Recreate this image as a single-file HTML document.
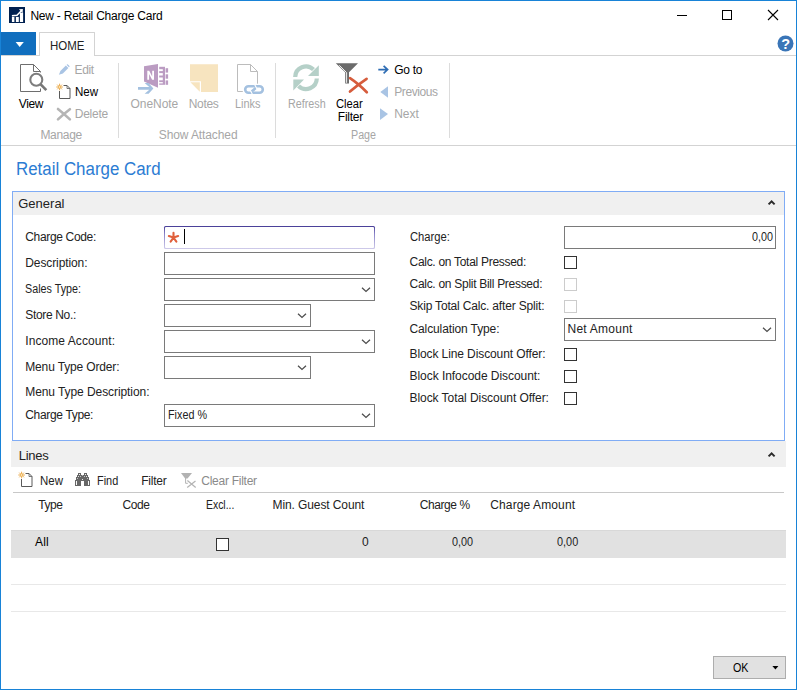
<!DOCTYPE html>
<html><head><meta charset="utf-8"><title>New - Retail Charge Card</title>
<style>
html,body{margin:0;padding:0;background:#fff;}
body{width:799px;height:693px;position:relative;overflow:hidden;font-family:"Liberation Sans",sans-serif;}
.t{position:absolute;transform-origin:0 0;white-space:pre;line-height:20px;height:20px;font-family:"Liberation Sans",sans-serif;}
.r{position:absolute;box-sizing:border-box;}
svg{position:absolute;overflow:visible;}
</style></head><body>
<div class="r" style="left:0px;top:0px;width:797px;height:690px;border:1px solid #1883d7;"></div>
<svg style="left:9px;top:7px" width="16" height="16" viewBox="0 0 16 16"><rect width="16" height="16" fill="#002050"/>
<rect x="2.9" y="9.9" width="2.5" height="5.1" fill="#fff"/><rect x="6.9" y="9.9" width="2.9" height="5.1" fill="#fff"/><rect x="10.9" y="5.6" width="3.2" height="9.4" fill="#fff"/>
<path d="M2.9 8.7 L8 8.3 L12.6 3.4" stroke="#fff" stroke-width="1.5" fill="none"/><path d="M9.9 2.3 L13.9 2 L13.6 6 Z" fill="#fff"/></svg>
<span class="t" style="left:30.40px;top:6px;font-size:12px;letter-spacing:-0.225px;color:#000;">New - Retail Charge Card</span>
<svg style="left:677px;top:9px" width="110" height="14" viewBox="0 0 110 14"><path d="M0 6.5 H10" stroke="#000" stroke-width="1"/><rect x="45.5" y="1.5" width="9" height="9" fill="none" stroke="#000" stroke-width="1"/><path d="M91 1 L101 11 M101 1 L91 11" stroke="#000" stroke-width="1.1"/></svg>
<div class="r" style="left:1px;top:32px;width:35px;height:23px;background:#106ebe;"></div>
<svg style="left:15px;top:42px" width="10" height="6" viewBox="0 0 10 6"><path d="M0.6 0 H8.8 L4.7 5 Z" fill="#fff"/></svg>
<div class="r" style="left:1px;top:55px;width:795px;height:1px;background:#d3d3d3;"></div>
<div class="r" style="left:39px;top:32px;width:56px;height:24px;background:#fff;border:1px solid #d3d3d3;border-bottom:none;border-radius:1px 1px 0 0;"></div>
<span class="t" style="left:50.00px;top:36px;font-size:12px;transform:scaleX(0.9583);color:#222;">HOME</span>
<svg style="left:776.5px;top:35.3px" width="17" height="17" viewBox="0 0 17 17"><circle cx="8.5" cy="8.5" r="8" fill="#3a75b7"/><text x="8.6" y="13.6" text-anchor="middle" font-family="Liberation Sans" font-weight="bold" font-size="14.5" fill="#fff">?</text></svg>
<div class="r" style="left:1px;top:145px;width:795px;height:1px;background:#d3d3d3;"></div>
<div class="r" style="left:118px;top:63px;width:1px;height:75px;background:#dcdcdc;"></div>
<div class="r" style="left:275px;top:63px;width:1px;height:75px;background:#dcdcdc;"></div>
<div class="r" style="left:449px;top:63px;width:1px;height:75px;background:#dcdcdc;"></div>
<span class="t" style="left:18.70px;top:94px;font-size:12px;letter-spacing:-0.325px;color:#000;">View</span>
<span class="t" style="left:74.50px;top:60px;font-size:12px;letter-spacing:-0.375px;color:#a6a6a6;">Edit</span>
<span class="t" style="left:74.80px;top:82px;font-size:12px;transform:scaleX(0.9617);color:#000;">New</span>
<span class="t" style="left:74.80px;top:104px;font-size:12px;letter-spacing:-0.270px;color:#a6a6a6;">Delete</span>
<span class="t" style="left:40.40px;top:125px;font-size:12px;letter-spacing:-0.315px;color:#a6a6a6;">Manage</span>
<span class="t" style="left:130.50px;top:94px;font-size:12px;letter-spacing:-0.042px;color:#a6a6a6;">OneNote</span>
<span class="t" style="left:188.75px;top:94px;font-size:12px;letter-spacing:-0.344px;color:#a6a6a6;">Notes</span>
<span class="t" style="left:235.00px;top:94px;font-size:12px;transform:scaleX(0.9107);color:#a6a6a6;">Links</span>
<span class="t" style="left:158.75px;top:125px;font-size:12px;letter-spacing:-0.104px;color:#a6a6a6;">Show Attached</span>
<span class="t" style="left:287.50px;top:94px;font-size:12px;transform:scaleX(0.8976);color:#a6a6a6;">Refresh</span>
<span class="t" style="left:336.00px;top:94px;font-size:12px;transform:scaleX(0.9328);color:#000;">Clear</span>
<span class="t" style="left:337.80px;top:107px;font-size:12px;letter-spacing:-0.245px;color:#000;">Filter</span>
<span class="t" style="left:394.25px;top:60px;font-size:12px;letter-spacing:-0.281px;color:#000;">Go to</span>
<span class="t" style="left:394.25px;top:82px;font-size:12px;letter-spacing:-0.429px;color:#a6a6a6;">Previous</span>
<span class="t" style="left:394.25px;top:104px;font-size:12px;letter-spacing:-0.042px;color:#a6a6a6;">Next</span>
<span class="t" style="left:351.25px;top:125px;font-size:12px;transform:scaleX(0.8929);color:#a6a6a6;">Page</span>
<svg style="left:0;top:0" width="799" height="693" viewBox="0 0 799 693">
<path d="M40.5 72.5 V71.5 L33.5 64.5 H20.5 V91.5 H40.5 V88.5" fill="none" stroke="#6e6e6e" stroke-width="1"/>
<path d="M33.5 64.5 V71.5 H40.5" fill="none" stroke="#6e6e6e" stroke-width="1"/>
<circle cx="36.3" cy="79.8" r="6.0" fill="#fff" stroke="#7d7d7d" stroke-width="2.1"/>
<path d="M40.7 84.4 L46.3 90.1" stroke="#777" stroke-width="2.7" stroke-linecap="butt"/>
<path d="M58.9 74.8 L60.4 70.9 L65.9 65.4 L68.4 67.9 L62.9 73.4 Z" fill="#a9c4e4"/>
<path d="M66.6 64.8 L67.6 64.2 L69.6 66.2 L69 67.3 Z" fill="#9dbbe0"/>
<g fill="none" stroke="#5a5a5a" stroke-width="1"><path d="M63.5 85.5 H67 L70 88.5 V98.5 H59.5 V91"/><path d="M67 85.5 V88.5 H70" stroke-width="0.8"/></g><g stroke="#e8a33d" stroke-width="0.9"><path d="M56.30 87.00 L62.90 87.00"/><path d="M57.27 84.67 L61.93 89.33"/><path d="M59.60 83.70 L59.60 90.30"/><path d="M61.93 84.67 L57.27 89.33"/></g><circle cx="59.6" cy="87" r="1.2" fill="#fff3d0" stroke="#e8a33d" stroke-width="0.7"/>
<path d="M58 109 Q63.5 113.4 69.9 119.4 M69.9 109.2 Q63.5 114 58 119.4" stroke="#b5b5b5" stroke-width="2.6" fill="none" stroke-linecap="round"/>
<path d="M144 66.2 L158 64 V87.8 L144 81.5 Z" fill="#bb9cc2"/>
<path d="M147.3 79.8 V70.8 H149.2 L152.2 76.6 V70.8 H154 V79.8 H152.1 L149.1 74 V79.8 Z" fill="#fff"/>
<rect x="159.2" y="66.8" width="5.8" height="18" fill="#bb9cc2"/>
<rect x="158.6" y="69.2" width="4.2" height="1.9" fill="#fff"/>
<rect x="158.6" y="73.1" width="4.2" height="2.4" fill="#fff"/>
<rect x="158.6" y="77.5" width="4.2" height="2.8" fill="#fff"/>
<rect x="158.6" y="82.1" width="4.2" height="1.3" fill="#fff"/>
<rect x="165.6" y="68.2" width="2.5" height="4.4" fill="#bb9cc2"/>
<rect x="165.6" y="74.3" width="2.5" height="4.4" fill="#bb9cc2"/>
<rect x="165.6" y="80.4" width="2.5" height="4.4" fill="#bb9cc2"/>
<path d="M138 87 H149.3 L144.6 83 H148.6 L153.4 88.4 L148.6 93.8 H144.6 L149.3 89.8 H138 Z" fill="#a4c1e0"/>
<path d="M190 64.2 H218 V92 H201 V81.2 H190 Z" fill="#f7e4bf"/>
<path d="M190.4 82.3 H199.8 V91.8 Z" fill="#f7e4bf"/>
<path d="M257.5 83.7 V71.5 L250.5 64.5 H237.5 V91.5 H242.8" fill="none" stroke="#bcbcbc" stroke-width="1"/>
<path d="M250.5 64.5 V71.5 H257.5" fill="none" stroke="#bcbcbc" stroke-width="1"/>
<rect x="245.2" y="86.2" width="17.6" height="6.5" rx="3.25" fill="none" stroke="#a4c1e0" stroke-width="2.6"/>
<path d="M251.6 91.6 L256.4 87.6" stroke="#a4c1e0" stroke-width="2.6"/>
<path d="M254.5 84.3 L257.1 89.2 M250.2 90.2 L252.8 95" stroke="#fff" stroke-width="1.1"/>
<path d="M295.2 77 A10.8 10.8 0 0 1 313.5 69.5" fill="none" stroke="#b5d0c8" stroke-width="4.2"/>
<path d="M318.8 65.2 V76 H308 Z" fill="#b5d0c8"/>
<path d="M316.8 78.5 A10.8 10.8 0 0 1 298.5 86" fill="none" stroke="#b5d0c8" stroke-width="4.2"/>
<path d="M293.3 90.4 V79.5 H304 Z" fill="#b5d0c8"/>
<path d="M335.8 63.2 H358 L349 72.2 V83.6 H345.2 V72.2 Z" fill="#6b6b6b"/>
<path d="M339.3 65.3 L346.6 72.6 V82.8" fill="none" stroke="#fff" stroke-width="0.9"/>
<path d="M350 78.2 Q358 83.5 366.8 92.2 M366.6 78.8 Q358 84.5 350 91.6" stroke="#d65c3c" stroke-width="2.7" fill="none" stroke-linecap="round"/>
<path d="M378.3 69.6 H387 M383.6 65.8 L387.6 69.6 L383.6 73.4" stroke="#2e6db4" stroke-width="1.7" fill="none"/>
<path d="M388 86.2 V97.8 L380.3 92 Z" fill="#a9c4e4"/>
<path d="M380 108.2 V120 L388 114.1 Z" fill="#a9c4e4"/>
<g fill="none" stroke="#5a5a5a" stroke-width="1"><path d="M25.5 473.5 H29 L32 476.5 V486.5 H21.5 V479"/><path d="M29 473.5 V476.5 H32" stroke-width="0.8"/></g><g stroke="#e8a33d" stroke-width="0.9"><path d="M18.30 475.00 L24.90 475.00"/><path d="M19.27 472.67 L23.93 477.33"/><path d="M21.60 471.70 L21.60 478.30"/><path d="M23.93 472.67 L19.27 477.33"/></g><circle cx="21.6" cy="475" r="1.2" fill="#fff3d0" stroke="#e8a33d" stroke-width="0.7"/>
<g shape-rendering="crispEdges" fill="#666"><rect x="78" y="473" width="3" height="1"/><rect x="84" y="473" width="3" height="1"/><rect x="78" y="474" width="3" height="1"/><rect x="84" y="474" width="3" height="1"/><rect x="77" y="475" width="11" height="1"/><rect x="77" y="476" width="11" height="1"/><rect x="76" y="477" width="13" height="1"/><rect x="76" y="478" width="13" height="1"/><rect x="76" y="479" width="13" height="1"/><rect x="75" y="480" width="15" height="1"/><rect x="75" y="481" width="6" height="1"/><rect x="84" y="481" width="6" height="1"/><rect x="75" y="482" width="6" height="1"/><rect x="84" y="482" width="6" height="1"/><rect x="75" y="483" width="6" height="1"/><rect x="84" y="483" width="6" height="1"/><rect x="75" y="484" width="6" height="1"/><rect x="84" y="484" width="6" height="1"/><rect x="75" y="485" width="6" height="1"/><rect x="84" y="485" width="6" height="1"/></g><g shape-rendering="crispEdges" fill="#fff"><rect x="79" y="474" width="1" height="1" opacity="0.9"/><rect x="85" y="474" width="1" height="1" opacity="0.9"/><rect x="78" y="476" width="1" height="1" opacity="0.8"/><rect x="80" y="476" width="1" height="1" opacity="0.6"/><rect x="84" y="476" width="1" height="1" opacity="0.6"/><rect x="86" y="476" width="1" height="1" opacity="0.8"/><rect x="82" y="479" width="1" height="1" opacity="0.85"/><rect x="77" y="478" width="1" height="1" opacity="0.6"/><rect x="87" y="478" width="1" height="1" opacity="0.6"/><rect x="76" y="481" width="1" height="4" opacity="0.95"/><rect x="88" y="481" width="1" height="4" opacity="0.95"/><rect x="82" y="475" width="1" height="1" opacity="0.5"/></g>
<path d="M181 473 H192 L187.5 478.4 H185.1 Z" fill="#b2b2b2"/>
<path d="M185.6 478 V483.3 H187.8" stroke="#b2b2b2" stroke-width="1" fill="none"/>
<path d="M187.4 480.6 L195.7 487.5 M195.5 480.9 L187.2 487.5" stroke="#b4b4b4" stroke-width="1.25" fill="none"/>
</svg>
<span class="t" style="left:15.80px;top:159px;font-size:18px;transform:scaleX(0.9388);color:#2b7cd3;">Retail Charge Card</span>
<div class="r" style="left:12px;top:191px;width:773px;height:250px;border:1px solid #80acf5;"></div>
<div class="r" style="left:13px;top:192px;width:771px;height:23px;background:#f0f0f0;"></div>
<span class="t" style="left:18.25px;top:194px;font-size:13px;letter-spacing:0.000px;color:#222;">General</span>
<svg style="left:767px;top:199px" width="9" height="7" viewBox="0 0 9 7"><path d="M1.6 5.4 L4.6 2.4 L7.6 5.4" stroke="#2b2b2b" stroke-width="2" fill="none"/></svg>
<span class="t" style="left:25.25px;top:227px;font-size:12px;letter-spacing:-0.341px;color:#222;">Charge Code:</span>
<span class="t" style="left:25.25px;top:253px;font-size:12px;letter-spacing:-0.102px;color:#222;">Description:</span>
<span class="t" style="left:25.25px;top:279px;font-size:12px;transform:scaleX(0.8960);color:#222;">Sales Type:</span>
<span class="t" style="left:25.25px;top:305px;font-size:12px;letter-spacing:-0.333px;color:#222;">Store No.:</span>
<span class="t" style="left:25.25px;top:331px;font-size:12px;letter-spacing:0.071px;color:#222;">Income Account:</span>
<span class="t" style="left:25.25px;top:357px;font-size:12px;letter-spacing:-0.150px;color:#222;">Menu Type Order:</span>
<span class="t" style="left:25.25px;top:382px;font-size:12px;letter-spacing:-0.077px;color:#222;">Menu Type Description:</span>
<span class="t" style="left:25.25px;top:405px;font-size:12px;letter-spacing:-0.330px;color:#222;">Charge Type:</span>
<div class="r" style="left:164px;top:226px;width:211px;height:23px;background:linear-gradient(#473d97,#8a84c8 35%,#cfcbea);border-radius:1.5px;"></div>
<div class="r" style="left:165px;top:227px;width:209px;height:21px;background:#fff;border-radius:1px;"></div>
<div class="r" style="left:164px;top:252px;width:211px;height:23px;background:#fff;border:1px solid #7a7a7a;"></div>
<div class="r" style="left:164px;top:278px;width:211px;height:23px;background:#fff;border:1px solid #7a7a7a;"></div>
<svg style="left:361px;top:287px" width="10" height="6" viewBox="0 0 10 6"><path d="M1 0.75 L5 4.5 L9 0.75" stroke="#4d4d4d" stroke-width="1.25" fill="none"/></svg>
<div class="r" style="left:164px;top:304px;width:147px;height:23px;background:#fff;border:1px solid #7a7a7a;"></div>
<svg style="left:297px;top:313px" width="10" height="6" viewBox="0 0 10 6"><path d="M1 0.75 L5 4.5 L9 0.75" stroke="#4d4d4d" stroke-width="1.25" fill="none"/></svg>
<div class="r" style="left:164px;top:330px;width:211px;height:23px;background:#fff;border:1px solid #7a7a7a;"></div>
<svg style="left:361px;top:339px" width="10" height="6" viewBox="0 0 10 6"><path d="M1 0.75 L5 4.5 L9 0.75" stroke="#4d4d4d" stroke-width="1.25" fill="none"/></svg>
<div class="r" style="left:164px;top:356px;width:147px;height:23px;background:#fff;border:1px solid #7a7a7a;"></div>
<svg style="left:297px;top:365px" width="10" height="6" viewBox="0 0 10 6"><path d="M1 0.75 L5 4.5 L9 0.75" stroke="#4d4d4d" stroke-width="1.25" fill="none"/></svg>
<div class="r" style="left:164px;top:404px;width:211px;height:23px;background:#fff;border:1px solid #7a7a7a;"></div>
<svg style="left:361px;top:413px" width="10" height="6" viewBox="0 0 10 6"><path d="M1 0.75 L5 4.5 L9 0.75" stroke="#4d4d4d" stroke-width="1.25" fill="none"/></svg>
<span class="t" style="left:167.50px;top:405px;font-size:12px;transform:scaleX(0.8991);color:#222;">Fixed %</span>
<svg style="left:0;top:0" width="799" height="693" viewBox="0 0 799 693"><path d="M173.50 237.60 L173.50 232.70 M173.50 237.60 L178.16 236.09 M173.50 237.60 L176.38 241.56 M173.50 237.60 L170.62 241.56 M173.50 237.60 L168.84 236.09" stroke="#e0603c" stroke-width="2.1" stroke-linecap="round" fill="none"/></svg>
<div class="r" style="left:184px;top:229px;width:1px;height:15px;background:#000;"></div>
<span class="t" style="left:409.50px;top:227px;font-size:12px;transform:scaleX(0.9357);color:#222;">Charge:</span>
<span class="t" style="left:409.50px;top:252px;font-size:12px;letter-spacing:-0.290px;color:#222;">Calc. on Total Pressed:</span>
<span class="t" style="left:409.50px;top:274px;font-size:12px;letter-spacing:-0.287px;color:#222;">Calc. on Split Bill Pressed:</span>
<span class="t" style="left:409.50px;top:296px;font-size:12px;letter-spacing:-0.174px;color:#222;">Skip Total Calc. after Split:</span>
<span class="t" style="left:409.50px;top:319px;font-size:12px;letter-spacing:-0.117px;color:#222;">Calculation Type:</span>
<span class="t" style="left:409.50px;top:344px;font-size:12px;letter-spacing:-0.100px;color:#222;">Block Line Discount Offer:</span>
<span class="t" style="left:409.50px;top:366px;font-size:12px;letter-spacing:-0.049px;color:#222;">Block Infocode Discount:</span>
<span class="t" style="left:409.50px;top:388px;font-size:12px;letter-spacing:-0.058px;color:#222;">Block Total Discount Offer:</span>
<div class="r" style="left:564px;top:226px;width:212px;height:23px;background:#fff;border:1px solid #7a7a7a;"></div>
<span class="t" style="left:752.00px;top:227px;font-size:12px;transform:scaleX(0.8984);color:#222;">0,00</span>
<div class="r" style="left:564px;top:256px;width:13px;height:13px;background:#fff;border:1px solid #333;"></div>
<div class="r" style="left:564px;top:278px;width:13px;height:13px;background:#fff;border:1px solid #ccc;"></div>
<div class="r" style="left:564px;top:300px;width:13px;height:13px;background:#fff;border:1px solid #ccc;"></div>
<div class="r" style="left:564px;top:318px;width:212px;height:23px;background:#fff;border:1px solid #7a7a7a;"></div>
<svg style="left:762px;top:327px" width="10" height="6" viewBox="0 0 10 6"><path d="M1 0.75 L5 4.5 L9 0.75" stroke="#4d4d4d" stroke-width="1.25" fill="none"/></svg>
<span class="t" style="left:567.50px;top:319px;font-size:12px;letter-spacing:0.250px;color:#222;">Net Amount</span>
<div class="r" style="left:564px;top:348px;width:13px;height:13px;background:#fff;border:1px solid #333;"></div>
<div class="r" style="left:564px;top:370px;width:13px;height:13px;background:#fff;border:1px solid #333;"></div>
<div class="r" style="left:564px;top:392px;width:13px;height:13px;background:#fff;border:1px solid #333;"></div>
<div class="r" style="left:11px;top:441px;width:775px;height:26px;background:#f0f0f0;"></div>
<span class="t" style="left:18.75px;top:446px;font-size:13px;letter-spacing:-0.281px;color:#222;">Lines</span>
<svg style="left:767px;top:451px" width="9" height="7" viewBox="0 0 9 7"><path d="M1.6 5.4 L4.6 2.4 L7.6 5.4" stroke="#2b2b2b" stroke-width="2" fill="none"/></svg>
<span class="t" style="left:39.50px;top:471px;font-size:12px;transform:scaleX(0.9534);color:#222;">New</span>
<span class="t" style="left:96.75px;top:471px;font-size:12px;transform:scaleX(0.9091);color:#222;">Find</span>
<span class="t" style="left:141.25px;top:471px;font-size:12px;letter-spacing:-0.225px;color:#222;">Filter</span>
<span class="t" style="left:201.25px;top:471px;font-size:12px;letter-spacing:-0.261px;color:#8a8a8a;">Clear Filter</span>
<div class="r" style="left:13px;top:492px;width:771px;height:1px;background:#c8c8c8;"></div>
<span class="t" style="left:38.20px;top:495px;font-size:12px;letter-spacing:-0.400px;color:#222;">Type</span>
<span class="t" style="left:122.50px;top:495px;font-size:12px;letter-spacing:-0.417px;color:#222;">Code</span>
<span class="t" style="left:206.25px;top:495px;font-size:12px;transform:scaleX(0.8659);color:#222;">Excl...</span>
<span class="t" style="left:272.50px;top:495px;font-size:12px;letter-spacing:-0.098px;color:#222;">Min. Guest Count</span>
<span class="t" style="left:419.70px;top:495px;font-size:12px;letter-spacing:-0.411px;color:#222;">Charge %</span>
<span class="t" style="left:490.30px;top:495px;font-size:12px;letter-spacing:0.110px;color:#222;">Charge Amount</span>
<div class="r" style="left:11px;top:530px;width:775px;height:28px;background:#e1e1e1;border-top:1px solid #d8d8d8;"></div>
<span class="t" style="left:35.10px;top:532px;font-size:12px;letter-spacing:0.162px;color:#000;">All</span>
<div class="r" style="left:216px;top:538px;width:13px;height:13px;background:#fff;border:1px solid #333;"></div>
<span class="t" style="left:362.00px;top:532px;font-size:12px;letter-spacing:0.000px;color:#222;">0</span>
<span class="t" style="left:452.30px;top:532px;font-size:12px;transform:scaleX(0.9027);color:#222;">0,00</span>
<span class="t" style="left:557.00px;top:532px;font-size:12px;transform:scaleX(0.9070);color:#222;">0,00</span>
<div class="r" style="left:11px;top:584px;width:775px;height:1px;background:#e8e8e8;"></div>
<div class="r" style="left:11px;top:611px;width:775px;height:1px;background:#e8e8e8;"></div>
<div class="r" style="left:713px;top:656px;width:73px;height:23px;background:#e1e1e1;border:1px solid #adadad;"></div>
<span class="t" style="left:732.50px;top:658px;font-size:12px;transform:scaleX(0.8921);color:#000;">OK</span>
<svg style="left:772px;top:665px" width="7" height="5" viewBox="0 0 7 5"><path d="M0.4 0.9 H6.4 L3.4 4.6 Z" fill="#000"/></svg>
</body></html>
